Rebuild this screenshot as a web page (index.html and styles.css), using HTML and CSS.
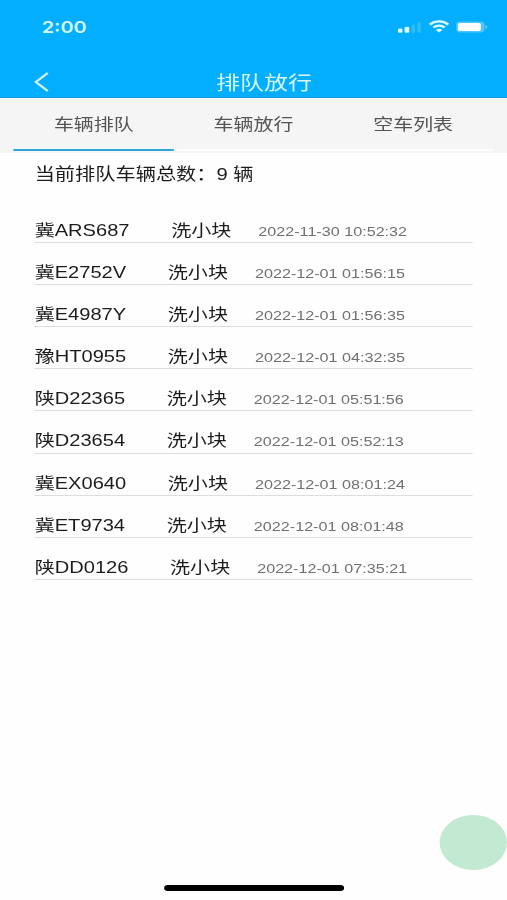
FILE: index.html
```html
<!DOCTYPE html>
<html lang="zh-CN">
<head>
    <meta charset="UTF-8">
    <meta name="viewport" content="width=device-width, initial-scale=1.0">
    <title>排队放行</title>
    <link rel="stylesheet" href="styles.css">
</head>
<body>
    <div class="phone">
        <div class="header">
            <div class="status-bar">
                <div class="time">2:00</div>
                <div class="status-icons">
                    <svg class="signal" viewBox="0 0 19 12">
                        <rect x="0" y="7.5" width="3.6" height="4.2" rx="1" />
                        <rect x="5.4" y="5.8" width="3.8" height="6" rx="1" />
                        <rect class="dim" x="11" y="3.6" width="3" height="8.2" rx="1" />
                        <rect class="dim" x="15.8" y="1" width="2.8" height="10.8" rx="1" />
                    </svg>
                    <svg class="wifi" viewBox="0 0 17 13">
                        <path class="arc" d="M1 4.6C5.2 0.4 11.8 0.4 16 4.6" />
                        <path class="arc" d="M3.9 7.5C6.5 4.9 10.5 4.9 13.1 7.5" />
                        <path d="M8.5 12.6L5.9 9.9C7.4 8.5 9.6 8.5 11.1 9.9Z" />
                    </svg>
                    <svg class="battery" viewBox="0 0 27 12">
                        <rect class="shell" x="0.5" y="0.5" width="23" height="11" rx="3" />
                        <rect x="2" y="2" width="18.6" height="8" rx="1.6" />
                        <path class="nub" d="M24 3.5V8.5C26.8 7.6 26.8 4.4 24 3.5Z" />
                    </svg>
                </div>
            </div>
            <div class="nav-bar">
                <svg class="back" viewBox="0 0 12 20">
                    <path d="M11 1L1.2 10L11 19" />
                </svg>
                <div class="title">排队放行</div>
            </div>
        </div>

        <div class="tabs">
            <div class="tab active">车辆排队</div>
            <div class="tab">车辆放行</div>
            <div class="tab">空车列表</div>
        </div>

        <div class="content">
            <div class="summary">当前排队车辆总数：9 辆</div>
            <div class="list">
                <div class="row"><span class="plate">冀ARS687</span><span class="cargo">洗小块</span><span class="date">2022-11-30 10:52:32</span></div>
                <div class="row"><span class="plate">冀E2752V</span><span class="cargo">洗小块</span><span class="date">2022-12-01 01:56:15</span></div>
                <div class="row"><span class="plate">冀E4987Y</span><span class="cargo">洗小块</span><span class="date">2022-12-01 01:56:35</span></div>
                <div class="row"><span class="plate">豫HT0955</span><span class="cargo">洗小块</span><span class="date">2022-12-01 04:32:35</span></div>
                <div class="row"><span class="plate">陕D22365</span><span class="cargo">洗小块</span><span class="date">2022-12-01 05:51:56</span></div>
                <div class="row"><span class="plate">陕D23654</span><span class="cargo">洗小块</span><span class="date">2022-12-01 05:52:13</span></div>
                <div class="row"><span class="plate">冀EX0640</span><span class="cargo">洗小块</span><span class="date">2022-12-01 08:01:24</span></div>
                <div class="row"><span class="plate">冀ET9734</span><span class="cargo">洗小块</span><span class="date">2022-12-01 08:01:48</span></div>
                <div class="row"><span class="plate">陕DD0126</span><span class="cargo">洗小块</span><span class="date">2022-12-01 07:35:21</span></div>
            </div>
        </div>

        <div class="float-button"></div>
        <div class="home-bar"></div>
    </div>
</body>
</html>
```
FILE: styles.css
```css
:root {
    --primary: #03aefe;
    --tab-bg: #f5f5f6;
    --header-text: #d5f8ff;
    --text-color: #1c1c1c;
    --line-color: #dedede;
}

body {
    margin: 0;
    height: 900px;
    overflow: hidden;
    background-color: #fefefe;
    font-family: "Liberation Sans", "Noto Sans CJK SC", sans-serif;
    color: var(--text-color);
}

.phone {
    position: relative;
    display: flex;
    flex-direction: column;
    width: 414px;
    height: 900px;
    transform: scaleX(1.22464);
    transform-origin: 0 0;
}

.header {
    height: 98px;
    box-sizing: border-box;
    background-color: var(--primary);
    border-bottom: 1px solid #159bdc;
    color: var(--header-text);
}

.status-bar {
    display: flex;
    justify-content: space-between;
    height: 66px;
    padding: 0 15px 0 34px;
    box-sizing: border-box;
}

.time {
    padding-top: 15px;
    font-family: Inter, sans-serif;
    font-size: 16.3px;
    font-weight: 600;
    line-height: 24px;
}

.status-icons {
    display: flex;
    height: 13px;
    padding-top: 20px;
    align-items: center;
    fill: #dcfaff;
}

.signal {
    width: 19px;
    height: 12px;
    margin-right: 6px;
}

.wifi {
    width: 17px;
    height: 13px;
    margin-right: 5px;
}

.wifi .arc {
    fill: none;
    stroke: #dcfaff;
    stroke-width: 2.2;
}

.battery {
    width: 27px;
    height: 12px;
    fill: #fff;
}

.battery .shell,
.battery .nub {
    fill: #6fd0ff;
    opacity: 0.7;
}

.dim {
    opacity: 0.2;
}

.nav-bar {
    display: flex;
    height: 32px;
    padding: 0 23px 0 28px;
    align-items: center;
}

.back {
    width: 12px;
    height: 20px;
    fill: none;
    stroke: var(--header-text);
    stroke-width: 2;
}

.title {
    flex: 1;
    padding-top: 2px;
    font-size: 19.6px;
    line-height: 30px;
    text-align: center;
}

.tabs {
    display: flex;
    height: 55px;
    padding: 0 11.4px;
    box-sizing: border-box;
    background-color: var(--tab-bg);
}

.tab {
    flex: 1;
    height: 53px;
    box-sizing: border-box;
    border-bottom: 2px solid #fdfdfd;
    color: #555;
    font-size: 16.3px;
    line-height: 52px;
    text-align: center;
}

.tab.active {
    border-bottom-color: #2fa5d8;
}

.content {
    padding: 0 27.8px;
}

.summary {
    padding-left: 0.5px;
    font-size: 16.5px;
    line-height: 42px;
}

.list {
    padding-top: 6px;
}

.row {
    display: flex;
    align-items: baseline;
    height: 42.1px;
    padding: 15px 0 0 0.5px;
    box-sizing: border-box;
    border-bottom: 1.5px solid var(--line-color);
    font-size: 16.4px;
    line-height: 28px;
    white-space: nowrap;
}

.cargo {
    margin-left: 34px;
}

.date {
    margin-left: 22px;
    font-size: 13.2px;
    color: #707070;
}

.float-button {
    position: absolute;
    right: 0;
    top: 815px;
    width: 55px;
    height: 55px;
    border-radius: 50%;
    background-color: #c2ead2;
}

.home-bar {
    width: 147px;
    height: 6px;
    margin: auto auto 9px 134px;
    border-radius: 3px;
    background-color: #000;
}
```
